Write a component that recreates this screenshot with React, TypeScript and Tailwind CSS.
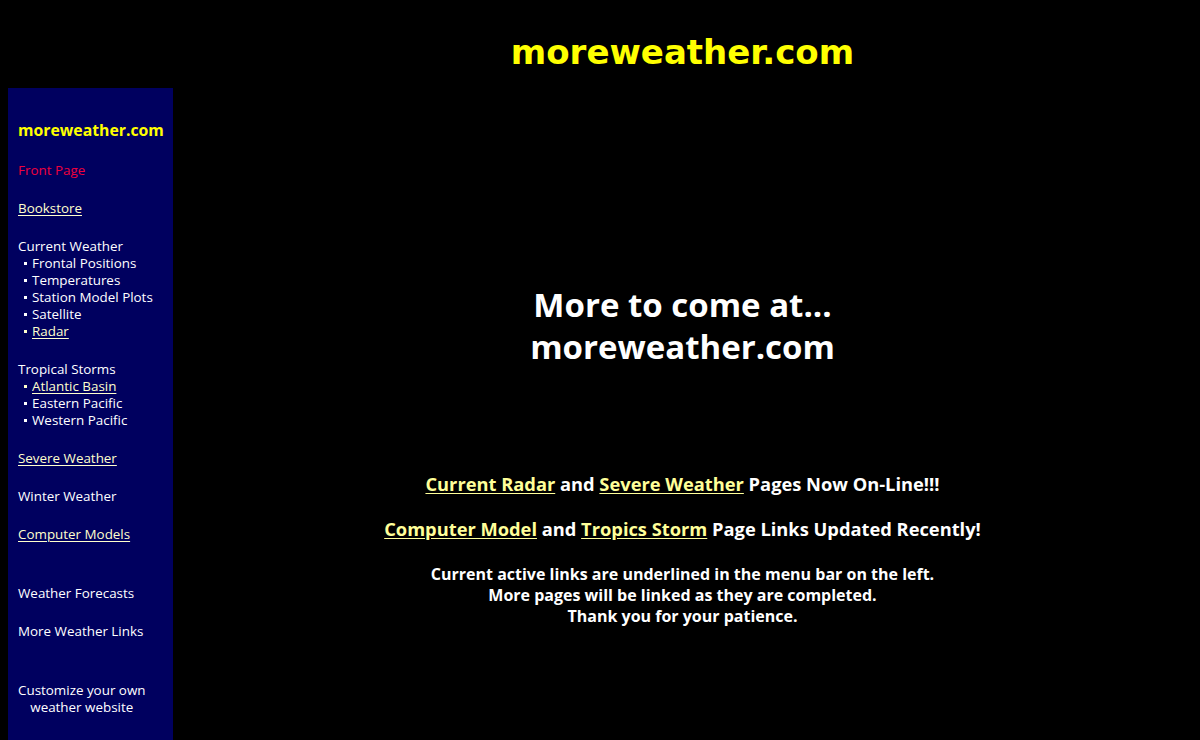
const sans = "font-['Open_Sans',_'Noto_Sans',_sans-serif]";

type Item = { label: string; link?: boolean };

function Bullet({ label, link }: Item) {
  return (
    <li className="flex items-center leading-[17px]">
      <span className={`ml-[6px] mr-[5px] inline-block h-[3px] w-[3px] ${link ? "bg-[#ffffcc]" : "bg-white"}`} />
      <span className={link ? "text-[#ffffcc] underline underline-offset-2" : "text-white"}>{label}</span>
    </li>
  );
}

export default function App() {
  return (
    <div className={`min-h-[740px] bg-black px-2 ${sans}`}>
      <header className="flex h-[88px] items-center pl-[165px]">
        <h1 className="w-full pt-[16px] text-center font-['DejaVu_Sans',_sans-serif] text-[34px] font-bold leading-[40px] text-[#ffff00]">
          moreweather.com
        </h1>
      </header>

      <div className="flex">
        <nav className="min-h-[652px] w-[165px] shrink-0 bg-[#00005f] pl-[10px] pt-[34px] text-[13.4px] leading-[17px] text-white">
          <p className="text-[15.8px] font-bold text-[#ffff00]">moreweather.com</p>
          <p className="mt-[23px] text-[#f0003c]">Front Page</p>
          <p className="mt-[21px] text-[#ffffcc] underline underline-offset-2">Bookstore</p>

          <p className="mt-[21px]">Current Weather</p>
          <ul>
            <Bullet label="Frontal Positions" />
            <Bullet label="Temperatures" />
            <Bullet label="Station Model Plots" />
            <Bullet label="Satellite" />
            <Bullet label="Radar" link />
          </ul>

          <p className="mt-[21px]">Tropical Storms</p>
          <ul>
            <Bullet label="Atlantic Basin" link />
            <Bullet label="Eastern Pacific" />
            <Bullet label="Western Pacific" />
          </ul>

          <p className="mt-[21px] text-[#ffffcc] underline underline-offset-2">Severe Weather</p>
          <p className="mt-[21px]">Winter Weather</p>
          <p className="mt-[21px] text-[#ffffcc] underline underline-offset-2">Computer Models</p>

          <p className="mt-[42px]">Weather Forecasts</p>
          <p className="mt-[21px]">More Weather Links</p>

          <p className="mt-[42px] w-max text-center">
            Customize your own
            <br />
            weather website
          </p>
        </nav>

        <main className="flex-1 pt-[196px] text-center font-bold text-white">
          <p className="text-[33px] leading-[42px]">
            More to come at...
            <br />
            moreweather.com
          </p>

          <p className="mt-[104px] text-[18.3px] leading-[24px]">
            <span className="text-[#ffff99] underline underline-offset-2">Current Radar</span> and{" "}
            <span className="text-[#ffff99] underline underline-offset-2">Severe Weather</span> Pages Now On-Line!!!
          </p>

          <p className="mt-[21px] text-[18.3px] leading-[24px]">
            <span className="text-[#ffff99] underline underline-offset-2">Computer Model</span> and{" "}
            <span className="text-[#ffff99] underline underline-offset-2">Tropics Storm</span> Page Links Updated
            Recently!
          </p>

          <p className="mt-[23px] text-[16px] leading-[21px]">
            Current active links are underlined in the menu bar on the left.
            <br />
            More pages will be linked as they are completed.
            <br />
            Thank you for your patience.
          </p>
        </main>
      </div>
    </div>
  );
}
